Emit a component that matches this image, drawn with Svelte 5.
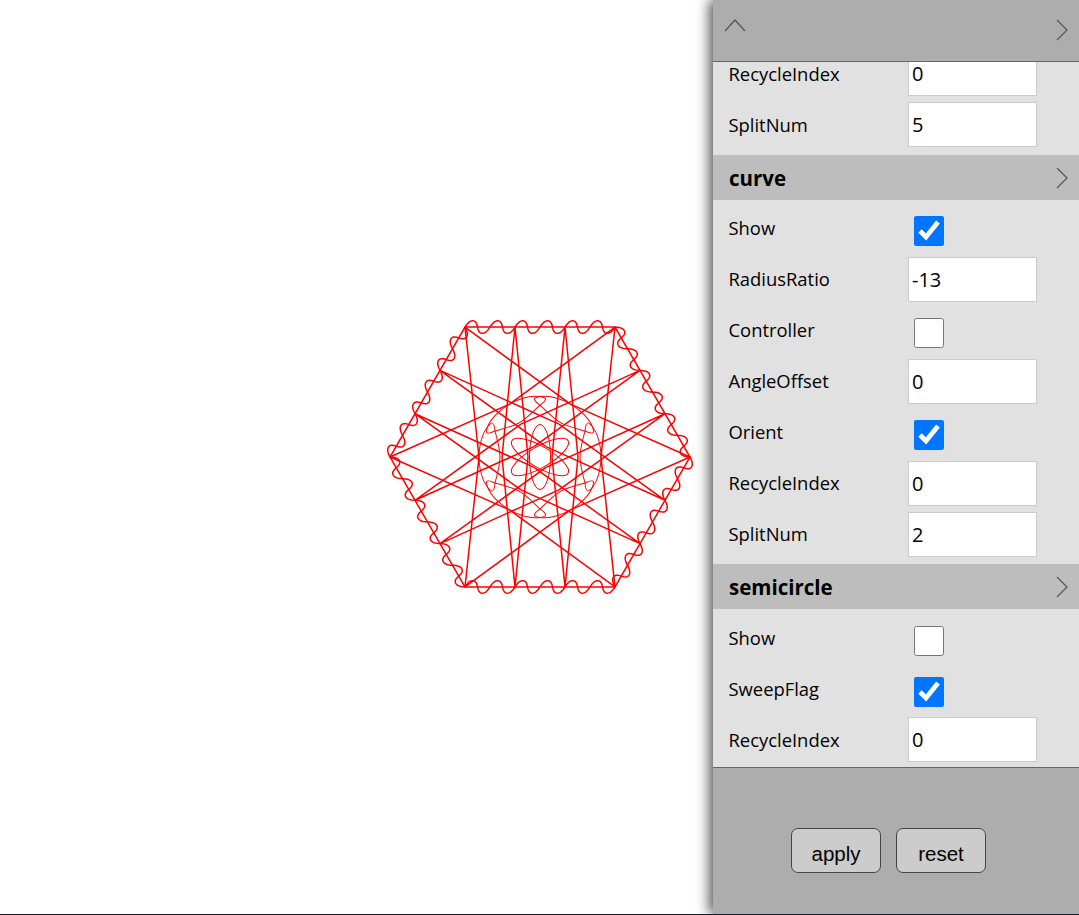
<script lang="ts">
    type Row = { label: string; value?: string; checked?: boolean };
    type Section = { title?: string; rows: Row[] };

    const sections: Section[] = [
        {
            rows: [
                { label: "RecycleIndex", value: "0" },
                { label: "SplitNum", value: "5" },
            ],
        },
        {
            title: "curve",
            rows: [
                { label: "Show", checked: true },
                { label: "RadiusRatio", value: "-13" },
                { label: "Controller", checked: false },
                { label: "AngleOffset", value: "0" },
                { label: "Orient", checked: true },
                { label: "RecycleIndex", value: "0" },
                { label: "SplitNum", value: "2" },
            ],
        },
        {
            title: "semicircle",
            rows: [
                { label: "Show", checked: false },
                { label: "SweepFlag", checked: true },
                { label: "RecycleIndex", value: "0" },
            ],
        },
    ];

    const R = 150;
    const sixths = [0, 60, 120, 180, 240, 300];

    const corners = [-120, -60, 0, 60, 120, 180].map((deg) => {
        const a = (deg * Math.PI) / 180;
        return [R * Math.cos(a), R * Math.sin(a)];
    });

    const fmt = (x: number, y: number) => `${x.toFixed(2)} ${y.toFixed(2)}`;
    const hexagon = corners.map((p, i) => (i ? "L" : "M") + fmt(p[0], p[1])).join(" ") + " Z";

    // spokes of one sixth, the rotation repeats them round the centre
    const spokes = [
        "M-75 -129.9 L-61 0",
        "M-75 -129.9 L30.5 -52.8",
        "M-25 -129.9 L-38 0",
        "M-25 -129.9 L-12 0",
        "M25 -129.9 L38 0",
        "M25 -129.9 L12 0",
    ].join(" ");

    // sine wave running clockwise along each edge, sheared so the bumps lean forward
    const wave = (() => {
        const out: string[] = [];
        corners.forEach((p, i) => {
            const q = corners[(i + 1) % 6];
            const dx = q[0] - p[0];
            const dy = q[1] - p[1];
            const nx = dy / R;
            const ny = -dx / R;
            for (let s = 0; s < 180; s++) {
                const u = s / 180;
                const off = 6.3 * Math.sin(2 * Math.PI * 6 * u);
                const lean = (0.22 * off) / R - 0.004 * Math.sin(2 * Math.PI * 12 * u);
                const x = p[0] + dx * (u + lean) + nx * off;
                const y = p[1] + dy * (u + lean) + ny * off;
                out.push((out.length ? "L" : "M") + fmt(x, y));
            }
        });
        return out.join(" ") + " Z";
    })();

    // one oval of the ring, its tips run past the sector edge and cross the next oval
    const oval =
        "M-61 0 C-61 -12 -57.5 -24 -52.4 -30.25 C-51 -32 -49 -34.2 -47.5 -33.8 " +
        "C-45.5 -33 -45.5 -29 -45 -26 C-43 -18 -40 -8 -40 0 " +
        "C-40 8 -43 18 -45 26 C-45.5 29 -45.5 33 -47.5 33.8 " +
        "C-49 34.2 -51 32 -52.4 30.25 C-57.5 24 -61 12 -61 0 Z";
</script>

<div class="page">
    <svg class="drawing" viewBox="-160 -160 320 320" width="320" height="320" aria-hidden="true">
        <path d={hexagon} class="line" />
        <path d={wave} class="line" />
        {#each sixths as angle}
            <path d={spokes} class="line" transform="rotate({angle})" />
            <path d={oval} class="thin" transform="rotate({angle})" />
        {/each}
        {#each [0, 60, 120] as angle}
            <ellipse rx="10.5" ry="32.5" class="thin" transform="rotate({angle})" />
        {/each}
    </svg>

    <aside class="panel">
        <header class="top">
            <svg class="chev up" viewBox="0 0 22 13" aria-hidden="true">
                <path d="M1 12 L11 1 L21 12" />
            </svg>
            <svg class="chev" viewBox="0 0 13 22" aria-hidden="true">
                <path d="M1 1 L11 11 L1 21" />
            </svg>
        </header>

        <div class="scroll">
            {#each sections as section}
                {#if section.title}
                    <div class="section-title">
                        <span>{section.title}</span>
                        <svg class="chev" viewBox="0 0 13 22" aria-hidden="true">
                            <path d="M1 1 L11 11 L1 21" />
                        </svg>
                    </div>
                {/if}
                <div class="rows">
                    {#each section.rows as row}
                        <div class="row">
                            <span class="label">{row.label}</span>
                            {#if row.value !== undefined}
                                <input type="text" value={row.value} readonly />
                            {:else}
                                <input type="checkbox" checked={row.checked} />
                            {/if}
                        </div>
                    {/each}
                </div>
            {/each}
        </div>

        <footer class="bottom">
            <button>apply</button>
            <button>reset</button>
        </footer>
    </aside>
</div>

<style>
    :global(body) {
        overflow: hidden;
        background: #fff;
    }

    .page {
        position: relative;
        box-sizing: border-box;
        height: 915px;
        border-bottom: 1px solid #1a1a2a;
        display: flex;
        align-items: center;
        justify-content: center;
        overflow: hidden;
    }

    .drawing {
        display: block;
    }

    .line,
    .thin {
        fill: none;
        stroke: #f00;
    }

    .line {
        stroke-width: 1.5;
    }

    .thin {
        stroke-width: 1;
    }

    .panel {
        position: absolute;
        top: 0;
        right: 0;
        bottom: 0;
        width: 366px;
        display: flex;
        flex-direction: column;
        background: #adadad;
        box-shadow: -4px 0 12px rgba(0, 0, 0, 0.65);
        font-family: "Open Sans", sans-serif;
        color: #000;
    }

    .top {
        flex: 0 0 62px;
        display: flex;
        justify-content: space-between;
        padding: 19px 10px 0 11px;
        box-sizing: border-box;
        border-bottom: 1px solid #666;
    }

    .chev {
        width: 13px;
        height: 22px;
        fill: none;
        stroke: #555;
        stroke-width: 1.2;
    }

    .chev.up {
        width: 22px;
        height: 13px;
    }

    .scroll {
        flex: 1;
        min-height: 0;
        display: flex;
        flex-direction: column;
        justify-content: flex-end;
        overflow: hidden;
        background: #e1e1e1;
    }

    .section-title {
        flex: none;
        height: 45px;
        display: flex;
        align-items: center;
        justify-content: space-between;
        padding: 1px 10px 0 16px;
        box-sizing: border-box;
        background: #bdbdbd;
        font-size: 20.5px;
        font-weight: 700;
    }

    .rows {
        flex: none;
        display: flex;
        flex-direction: column;
        gap: 6px;
        padding: 6px 0 7px;
    }

    .rows:first-child {
        padding-bottom: 8px;
    }

    .rows:last-child {
        padding-bottom: 5px;
    }

    .rows:first-child .label,
    .rows:last-child .label {
        margin-top: 2px;
    }

    .rows:last-child input[type="checkbox"] {
        margin-top: 7px;
    }

    .row {
        height: 45px;
        display: flex;
        align-items: center;
        padding-left: 15.5px;
    }

    .label {
        width: 179.5px;
        font-size: 18.4px;
        line-height: 1.2;
    }

    input[type="text"] {
        box-sizing: border-box;
        width: 129px;
        height: 45px;
        margin: 0;
        padding: 0 3px;
        border: 1px solid #ccc;
        background: #fff;
        font-family: "Open Sans", sans-serif;
        font-size: 20px;
        color: #000;
        outline: none;
    }

    input[type="checkbox"] {
        width: 30px;
        height: 30px;
        margin: 5px 0 0 6px;
    }

    .bottom {
        flex: 0 0 147px;
        box-sizing: border-box;
        border-top: 1px solid #666;
        padding: 60px 0 0 78px;
        display: flex;
        gap: 15px;
        align-items: flex-start;
    }

    button {
        width: 90px;
        height: 45px;
        padding: 7px 0 0;
        border: 1px solid #444;
        border-radius: 7px;
        background: #ccc;
        font-family: "Liberation Sans", Arial, sans-serif;
        font-size: 20.5px;
        color: #000;
    }
</style>
